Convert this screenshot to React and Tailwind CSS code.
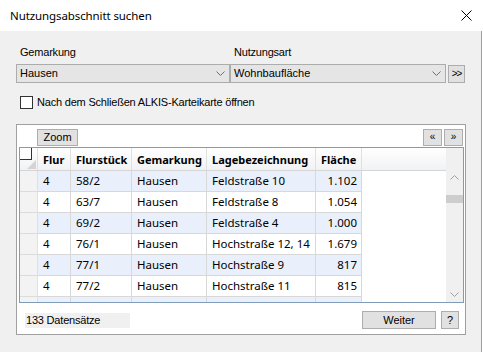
import React from "react";

const rows = [
  ["4", "58/2", "Hausen", "Feldstraße 10", "1.102"],
  ["4", "63/7", "Hausen", "Feldstraße 8", "1.054"],
  ["4", "69/2", "Hausen", "Feldstraße 4", "1.000"],
  ["4", "76/1", "Hausen", "Hochstraße 12, 14", "1.679"],
  ["4", "77/1", "Hausen", "Hochstraße 9", "817"],
  ["4", "77/2", "Hausen", "Hochstraße 11", "815"],
  ["", "", "", "", ""],
];

function Chevron({ up = false, className = "" }) {
  return (
    <svg width="9" height="5" viewBox="0 0 9 5" className={className}>
      <path
        d={up ? "M0.5 4.5 L4.5 0.5 L8.5 4.5" : "M0.5 0.5 L4.5 4.5 L8.5 0.5"}
        fill="none"
        stroke="currentColor"
        strokeWidth="1"
      />
    </svg>
  );
}

function Combo({ value, className = "" }) {
  return (
    <div
      className={`h-[19px] bg-[#e5e5e5] border border-[#acacac] flex items-center justify-between pl-[3px] pr-[4px] ${className}`}
    >
      <span className="text-[11px] leading-none text-black">{value}</span>
      <Chevron className="text-[#707070]" />
    </div>
  );
}

export default function App() {
  const colW = ["w-[33px]", "w-[61px]", "w-[75px]", "w-[109px]", "w-[46px]"];
  return (
    <div className="w-[483px] h-[352px] bg-white overflow-hidden font-['Liberation_Sans',sans-serif] text-black">
      {/* Title bar */}
      <div className="h-[31px] flex items-center justify-between pl-[10px] pr-[11px] bg-white">
        <span className="text-[11.5px] font-['Noto_Sans',sans-serif] text-black tracking-[-0.1px]">Nutzungsabschnitt suchen</span>
        <svg width="11" height="11" viewBox="0 0 11 11">
          <path d="M0.5 0.5 L10.5 10.5 M10.5 0.5 L0.5 10.5" stroke="#000" strokeWidth="1" />
        </svg>
      </div>
      {/* Body */}
      <div className="w-[482px] h-[321px] bg-[#f0f0f0] border-r border-[#a0a0a0] pl-[16px] pt-[15px]">
        {/* Labels & combos */}
        <div className="flex">
          <div className="w-[214px] flex flex-col">
            <span className="text-[11px] leading-[13px] pl-[4px] tracking-[-0.2px]">Gemarkung</span>
            <Combo value="Hausen" className="mt-[5px] w-[214px]" />
          </div>
          <div className="w-[216px] flex flex-col">
            <span className="text-[11px] leading-[13px] pl-[4px] tracking-[-0.2px]">Nutzungsart</span>
            <Combo value="Wohnbaufläche" className="mt-[5px] w-[216px]" />
          </div>
          <div className="flex flex-col justify-end ml-[2px]">
            <div className="w-[17px] h-[18px] bg-[#e1e1e1] border border-[#adadad] flex items-center justify-center text-[10px] leading-none tracking-[-1px]">
              &gt;&gt;
            </div>
          </div>
        </div>
        {/* Checkbox */}
        <div className="flex items-center mt-[13px] pl-[4px]">
          <div className="w-[13px] h-[13px] bg-white border border-[#333]" />
          <span className="text-[11px] leading-[13px] ml-[4px] tracking-[-0.2px]">
            Nach dem Schließen ALKIS-Karteikarte öffnen
          </span>
        </div>
        {/* Groupbox */}
        <div className="mt-[15px] w-[450px] h-[211px] border border-[#a0a0a0] bg-white flex flex-col">
          <div className="h-[22px] flex items-center justify-between pl-[20px] pr-[2px] pt-[2px]">
            <div className="w-[41px] h-[17px] bg-[#e1e1e1] border border-[#adadad] flex items-center justify-center text-[11px] leading-none">
              Zoom
            </div>
            <div className="flex gap-[2px]">
              <div className="w-[19px] h-[17px] bg-[#e1e1e1] border border-[#adadad] flex items-center justify-center text-[10px] leading-none">
                «
              </div>
              <div className="w-[19px] h-[17px] bg-[#e1e1e1] border border-[#adadad] flex items-center justify-center text-[10px] leading-none">
                »
              </div>
            </div>
          </div>
          {/* Grid */}
          <div className="relative ml-[2px] w-[445px] h-[156px] border border-[#7f9db9] flex overflow-hidden font-['Noto_Sans',sans-serif]">
            <div className="flex-1 flex flex-col">
              {/* Header */}
              <div className="h-[23px] flex shrink-0 bg-gradient-to-b from-white to-[#f1f2f4] border-b border-[#d5d5d5]">
                <div className="w-[18px] relative border-r border-[#e0e0e0]">
                  <svg width="9" height="9" viewBox="0 0 9 9" className="absolute right-[1px] bottom-[1px]">
                    <path d="M9 0 L9 9 L0 9 Z" fill="#d4d4d4" />
                  </svg>
                </div>
                {["Flur", "Flurstück", "Gemarkung", "Lagebezeichnung", "Fläche"].map((h, i) => (
                  <div
                    key={h}
                    className={`${colW[i]} border-r border-[#e0e0e0] flex items-center pl-[5px] text-[11px] font-bold leading-none`}
                  >
                    {h}
                  </div>
                ))}
                <div className="flex-1" />
              </div>
              {rows.map((r, ri) => (
                <div key={ri} className="h-[21px] flex shrink-0">
                  <div className="w-[18px] bg-[#f3f3f3] border-r border-[#e0e0e0] border-b border-b-[#dcdcdc]" />
                  {r.map((c, ci) => (
                    <div
                      key={ci}
                      className={`${colW[ci]} border-r border-b border-[#d8d8d8] flex items-center text-[11.5px] leading-none ${
                        ri % 2 === 0 ? "bg-[#e9f0fb]" : "bg-white"
                      } ${ci === 4 ? "justify-end pr-[4px]" : "pl-[5px]"}`}
                    >
                      {c}
                    </div>
                  ))}
                  <div className="flex-1 bg-white" />
                </div>
              ))}
            </div>
            {/* Scrollbar */}
            <div className="w-[17px] bg-[#f0f0f0] flex flex-col items-center text-[#a0a0a0]">
              <Chevron up className="mt-[27px]" />
              <div className="w-[17px] h-[8px] bg-[#cdcdcd] mt-[15px]" />
              <div className="flex-1" />
              <Chevron className="mb-[5px]" />
            </div>
            {/* corner checkbox */}
            <div className="absolute left-[-1px] top-[-1px] w-[13px] h-[13px] bg-white border border-[#333]" />
          </div>
          {/* Bottom row */}
          <div className="flex items-center mt-[8px] pl-[8px] pr-[6px]">
            <div className="w-[105px] h-[15px] bg-[#f0f0f0] flex items-center pl-[1px] text-[11px] leading-none tracking-[-0.2px]">
              133 Datensätze
            </div>
            <div className="flex-1" />
            <div className="w-[74px] h-[18px] bg-[#e1e1e1] border border-[#adadad] flex items-center justify-center text-[11px] leading-none">
              Weiter
            </div>
            <div className="w-[18px] h-[18px] ml-[5px] bg-[#e1e1e1] border border-[#adadad] flex items-center justify-center text-[11px] leading-none">
              ?
            </div>
          </div>
        </div>
      </div>
    </div>
  );
}
